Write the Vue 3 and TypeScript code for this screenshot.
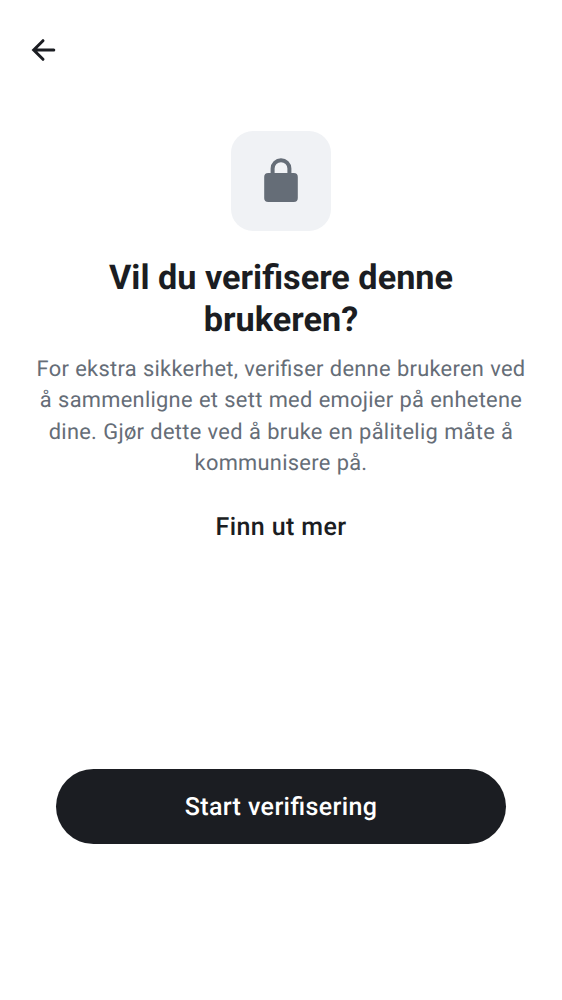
<script setup lang="ts">
const bodyLines: string[] = [
  'For ekstra sikkerhet, verifiser denne brukeren ved',
  'å sammenligne et sett med emojier på enhetene',
  'dine. Gjør dette ved å bruke en pålitelig måte å',
  'kommunisere på.',
]
</script>

<template>
  <main class="screen">
    <header class="bar">
      <button class="back" aria-label="Tilbake">
        <svg width="24" height="24" viewBox="0 0 24 24" fill="none" stroke="#1b1d22" stroke-width="3" stroke-linecap="round">
          <path d="M21.800 12H3M11 2.700L1.700 12l9.300 9.300" />
        </svg>
      </button>
    </header>
    <section class="content">
      <div class="tile">
        <svg width="34" height="44" viewBox="0 0 34 44">
          <path d="M8.600 17V10.600a8.400 8.400 0 0 1 16.800 0V17" fill="none" stroke="#656d77" stroke-width="4" />
          <rect x="0.200" y="14.900" width="33.600" height="29.100" rx="4" fill="#656d77" />
        </svg>
      </div>
      <h1 class="title"><span>Vil du verifisere denne</span><span>brukeren?</span></h1>
      <p class="body"><span v-for="line in bodyLines" :key="line">{{ line }}</span></p>
      <button class="more">Finn ut mer</button>
    </section>
    <button class="start">Start verifisering</button>
  </main>
</template>

<style>
body { background: #fff; }
</style>

<style scoped>
.screen {
  box-sizing: border-box;
  height: 1000px;
  display: flex;
  flex-direction: column;
  align-items: center;
  padding-bottom: 156px;
  background: #fff;
  color: #1b1d22;
  font-family: Roboto, sans-serif;
  font-feature-settings: "liga" 1;
  text-rendering: geometricPrecision;
}
button {
  border: 0;
  padding: 0;
  background: none;
  color: inherit;
  font: inherit;
  font-feature-settings: "liga" 1;
  text-rendering: geometricPrecision;
}
.bar {
  box-sizing: border-box;
  width: 100%;
  height: 100px;
  display: flex;
  align-items: center;
  padding-left: 32px;
}
.back { display: flex; }
.back svg, .tile svg { display: block; }
.back svg { overflow: visible; }
.content {
  flex: 1;
  display: flex;
  flex-direction: column;
  align-items: center;
  padding-top: 31px;
}
.tile {
  box-sizing: border-box;
  width: 100px;
  height: 100px;
  padding-bottom: 2px;
  border-radius: 22px;
  background: #f0f2f5;
  display: flex;
  align-items: center;
  justify-content: center;
}
.title, .body { margin: 0; text-align: center; white-space: nowrap; }
.title span, .body span { display: block; }
.title {
  margin-top: 26px;
  font-size: 34.250px;
  line-height: 42px;
  font-weight: 700;
}
.body {
  margin-top: 13px;
  font-size: 21.850px;
  line-height: 31.250px;
  letter-spacing: 0.280px;
  word-spacing: 0.400px;
  color: #656d77;
}
.more {
  margin-top: 30px;
  font-size: 25px;
  line-height: 37px;
  font-weight: 500;
  letter-spacing: 0.400px;
}
.start {
  width: 450px;
  height: 75px;
  padding-top: 2px;
  border-radius: 38px;
  background: #1b1d22;
  color: #fff;
  font-size: 25px;
  font-weight: 500;
  letter-spacing: 0.400px;
}
</style>
